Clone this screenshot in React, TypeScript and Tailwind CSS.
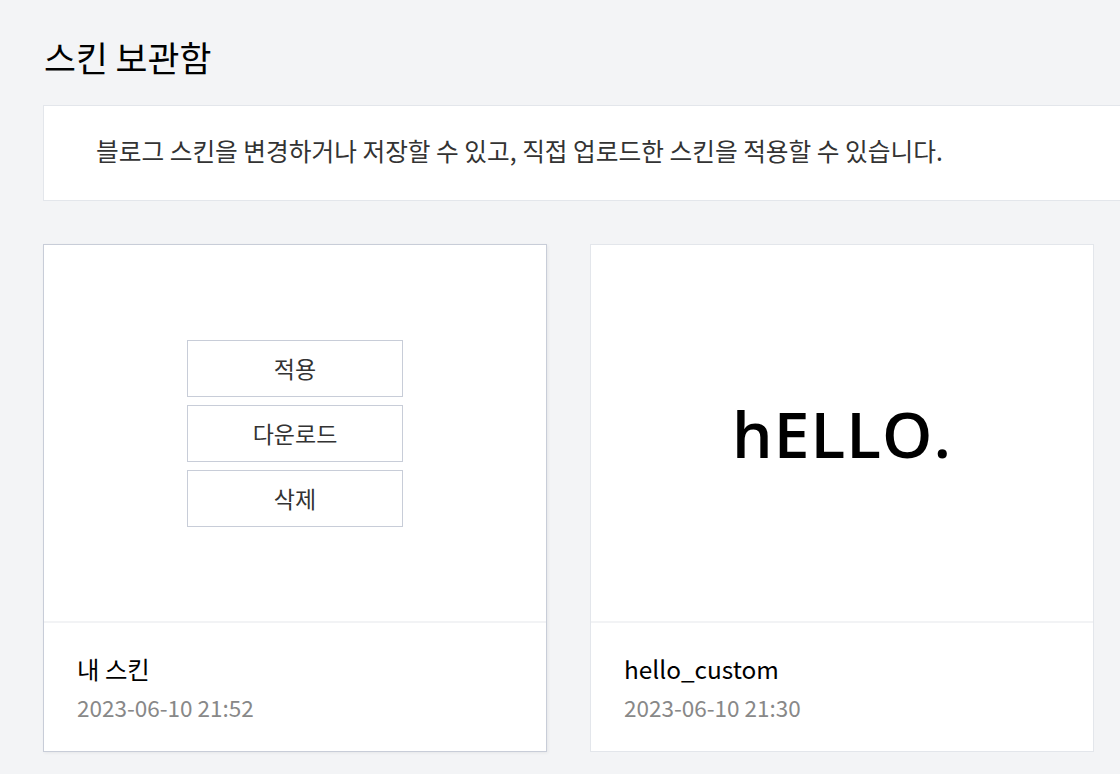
import React from 'react';

const skins = [
  { name: '내 스킨', date: '2023-06-10 21:52', mine: true },
  { name: 'hello_custom', date: '2023-06-10 21:30', mine: false },
];

function SkinCard({ name, date, mine }: { name: string; date: string; mine: boolean }) {
  return (
    <div
      className={`bg-white border ${
        mine ? 'border-[#c8cdd8] shadow-[1px_1px_3px_rgba(0,0,0,0.06)]' : 'border-[#e3e6eb]'
      }`}
    >
      <div className="h-[378px] flex items-center justify-center border-b-2 border-[#f2f3f5]">
        {mine ? (
          <div className="flex flex-col gap-2">
            {['적용', '다운로드', '삭제'].map((label) => (
              <button
                key={label}
                type="button"
                className="w-[216px] h-[57px] bg-white border border-[#c8cdd8] text-[23px] text-[#333]"
              >
                {label}
              </button>
            ))}
          </div>
        ) : (
          <span className="text-[64px] font-semibold text-black tracking-[1px] font-['Open_Sans',sans-serif] blur-[0.6px] mt-[2px]">
            hELLO.
          </span>
        )}
      </div>
      <div className="px-[33px] pt-[27px] pb-[26px]">
        <div className="text-[24.4px] text-black leading-[38px]">{name}</div>
        <div className="text-[22.5px] text-[#888] leading-[36px] mt-[1px]">{date}</div>
      </div>
    </div>
  );
}

export default function App() {
  return (
    <div className="h-screen overflow-hidden bg-[#f3f4f6] font-['Noto_Sans_CJK_KR',sans-serif]">
      <div className="w-[1598px] pl-[43px] pt-[33px]">
        <h1 className="text-[34.7px] leading-[48px] text-black font-normal pl-[1px]">스킨 보관함</h1>
        <div className="mt-[24px] h-[96px] bg-white border border-[#e3e6eb] flex items-center pl-[52px]">
          <p className="text-[24.7px] text-[#333] mt-[-4px]">
            블로그 스킨을 변경하거나 저장할 수 있고, 직접 업로드한 스킨을 적용할 수 있습니다.
          </p>
        </div>
        <div className="mt-[43px] grid grid-cols-[504px_504px] gap-[43px]">
          {skins.map((s) => (
            <SkinCard key={s.name} {...s} />
          ))}
        </div>
      </div>
    </div>
  );
}
